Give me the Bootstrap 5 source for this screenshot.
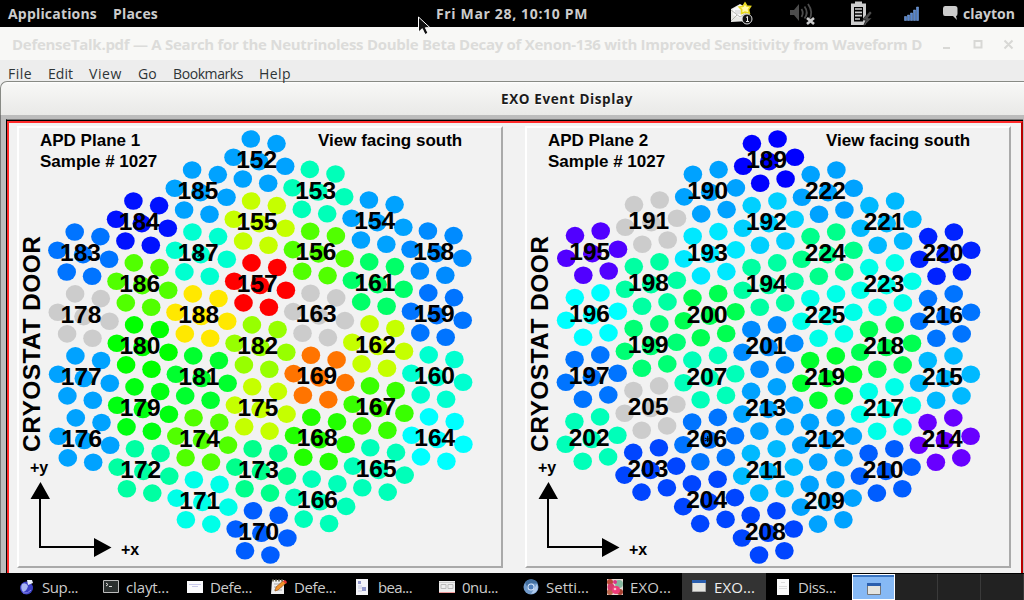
<!DOCTYPE html>
<html lang="en">
<head>
<meta charset="utf-8">
<title>EXO Event Display</title>
<link href="https://cdn.jsdelivr.net/npm/bootstrap@5.3.0/dist/css/bootstrap.min.css" rel="stylesheet">
<style>
body{width:1024px;height:600px;overflow:hidden;background:#000;font-family:"Open Sans","Noto Sans",sans-serif;font-size:14px;line-height:20px}
.fit{display:inline-block;white-space:nowrap}
.topbar{height:27px;color:#ccc;font-weight:700;font-size:14px;padding-top:1px}
.topbar svg,.task svg{display:block;flex:none}
.username{position:absolute;left:963px;top:4px;color:#ccc;font-weight:700}
.winback{height:33px;background:#f8f8f6;color:#dcdcda;font-weight:700;padding:1px 10px 0 12px;font-size:15px}
.menus{height:21px;background:#ededed;color:#2e3436;padding-left:8px;font-size:14px}
.menus .fit{margin-right:16px;line-height:28px}
.exo-title{height:34px;border-top:1px solid #888a85;border-left:1px solid #888a85;border-top-left-radius:7px;background:linear-gradient(#fff 0,#f7f7f6 2px,#e9e9e7);color:#1c1c1c;font-weight:700;font-size:13.5px;padding-left:500px;line-height:35px;text-shadow:0 1px #fff}
.titlewrap{background:#ededed}
.frame{height:458px;background:#bcbcbc;border-left:1px solid #777;padding:4px 1px 0 5px}
.bezel{height:454px;border-top:1px solid #777;border-left:1px solid #000}
.redline{height:453px;border:2px solid #ff2a2a;border-right-color:#b80000;border-bottom:0;background:#f2f2f2;box-shadow:0 -1px #000;padding:3px 0 0 8px;margin-top:1px}
.plane{width:486px;height:442px;border:2px solid #fff;border-right-color:#aaa;border-bottom-color:#aaa;background:#f2f2f2}
.plane svg{display:block;font-family:"Liberation Sans",Arial,sans-serif;font-weight:700}
.taskbar{height:27px;background:#000;color:#ccc;padding-left:10px}
.task{width:84px;padding-left:9px;gap:7px;height:27px;font-size:15px}
.task.on{background:#333;color:#eee}
.desk{width:43px;height:26px;background:#222;border-right:1px solid #3a3a3a;margin-top:1px}
.desk.on{background:#86b9f5;border:1px solid #fff;box-shadow:inset 0 2px #3a74c0}
.pointer{position:absolute;left:417px;top:16px;z-index:5}
</style>
<script src="https://cdn.jsdelivr.net/npm/bootstrap@5.3.0/dist/js/bootstrap.bundle.min.js"></script>
</head>
<body>
<nav class="topbar d-flex align-items-center">
  <span class="fit" data-w="89" style="margin-left:8px">Applications</span>
  <span class="fit" data-w="45" style="margin-left:16px">Places</span>
  <span class="fit" data-w="152" style="margin-left:278px">Fri Mar 28, 10:10 PM</span>
  <svg width="436" height="27" viewBox="588 0 436 27" style="margin-top:-1px">
    <!-- mail -->
    <path d="M731 9l9-5 9 5v12l-18 1z" fill="#e9e9e5"/><path d="M733 9l7-4 7 4v6l-7 3-7-3z" fill="#fafafa"/><path d="M731 21l6-6M731 10l9 7 8-5" stroke="#b5b5b0" fill="none"/>
    <path d="M735 11h8M735 13h7" stroke="#ccc"/>
    <path d="M745 3l1.800 3 3.700.400-2 3.100.8 3.700-4.300-1-3.500 1.300.2-3.900-2.500-2.600 3.900-.8z" fill="#fff8a8" stroke="#e8d820" stroke-width="1.600"/>
    <circle cx="747" cy="19" r="5" fill="#111" stroke="#ddd" stroke-width="1"/><path d="M746 17.500l1.500-1v5M746 21.500h3" stroke="#eee" fill="none"/>
    <!-- muted volume -->
    <path d="M790 10h4l5-6v17l-5-6h-4z" fill="#4c4c4c"/><path d="M801.500 9q2.500 4 0 8M804.500 6.500q4.500 6 0 12M808 4q6 8.500 1 16" stroke="#4c4c4c" stroke-width="1.800" fill="none"/>
    <path d="M807 18l7 6M814 18l-7 6" stroke="#ccc" stroke-width="2.600"/>
    <!-- battery -->
    <path d="M855 1.500h7v2h4v21.500h-15V3.500h4z" fill="#ccc"/><path d="M854 7h9v14.500h-9z" fill="#000"/><path d="M855 9h7M855 12.300h7M855 15.600h7M855 19h5" stroke="#ccc" stroke-width="1.700"/>
    <path d="M870 11l-8 9h4l-3 7 9-9h-4l4-5z" fill="#4c4c4c" stroke="#000" stroke-width=".6"/>
    <!-- signal -->
    <g fill="#5585cf" stroke="#8bb0e8" stroke-width=".5"><path d="M904.500 16.500h2v4h-2zM907.500 15h2v5.500h-2zM910.500 13h2v7.500h-2zM913.500 10h2v10.500h-2zM916.500 7h2v13.500h-2z"/></g>
    <!-- chat -->
    <path d="M945 6h10q2.500 0 2.500 2.500v5q0 2.500-1.500 2.500l1 4-4-4h-8q-2 0-2-2.500v-5Q943 6 945 6z" fill="#ccc"/>
  </svg>
</nav>
<div class="username"><span class="fit" data-w="52">clayton</span></div>

<header class="winback d-flex align-items-center">
  <span class="fit" data-w="910">DefenseTalk.pdf — A Search for the Neutrinoless Double Beta Decay of Xenon-136 with Improved Sensitivity from Waveform D</span>
  <svg class="ms-auto" width="72" height="16" viewBox="942 36 72 16" stroke="#d8d8d5" fill="none" stroke-width="2"><path d="M943 48h7M974.500 41h7v6.500h-7zM1004.500 40.500l8 8M1012.500 40.500l-8 8" /></svg>
</header>
<div class="menus d-flex">
  <span class="fit" data-w="24">File</span><span class="fit" data-w="25">Edit</span><span class="fit" data-w="33">View</span><span class="fit" data-w="19">Go</span><span class="fit" data-w="70">Bookmarks</span><span class="fit" data-w="32">Help</span>
</div>
<div class="titlewrap"><div class="exo-title"><span class="fit" data-w="132">EXO Event Display</span></div></div>

<main class="frame"><div class="bezel"><div class="redline d-flex">
  <div class="plane"><svg id="plane1" width="482" height="438" viewBox="19 128 482 438"></svg></div>
  <div class="plane" style="margin-left:22px"><svg id="plane2" width="482" height="438" viewBox="527 128 482 438"></svg></div>
</div></div></main>

<footer class="taskbar d-flex">
  <div class="task d-flex align-items-center"><svg width="16" height="16"><circle cx="7.500" cy="9" r="6.500" fill="#3b3fc4"/><path d="M3 5q4-2 6 2-1 5-5 6-3-4-1-8z" fill="#a9b5f2"/><path d="M8 1l5 0 1 3-5 2z" fill="#e8eefc"/><path d="M4 14q5 1 8-3" stroke="#88e" fill="none"/></svg><span class="fit" data-w="36">Sup...</span></div>
  <div class="task d-flex align-items-center"><svg width="16" height="16"><path d="M.5 1.500h15v12H.5z" fill="#2b302f" stroke="#bbb"/><path d="M3 4l2 1.500L3 7M6 7.500h3" stroke="#ddd" fill="none"/></svg><span class="fit" data-w="43">clayt...</span></div>
  <div class="task d-flex align-items-center"><svg width="16" height="16"><path d="M0 2h16v12H0z" fill="#fbfbfd"/><path d="M2 5.500h12M5 7.500h6" stroke="#c9c9ea"/></svg><span class="fit" data-w="42">Defe...</span></div>
  <div class="task d-flex align-items-center"><svg width="16" height="16"><path d="M1 1h12v14H0z" fill="#eee"/><path d="M1 1.500h12" stroke="#776" stroke-dasharray="2 1" stroke-width="2"/><path d="M3 5h8M3 8h8M3 11h8" stroke="#aaa"/><path d="M4 12l1-4 7-6 3 2-8 7z" fill="#f0922a" stroke="#8b4a12" stroke-width=".6"/><path d="M12 2l2-1 2 2-1 2z" fill="#e33"/></svg><span class="fit" data-w="42">Defe...</span></div>
  <div class="task d-flex align-items-center"><svg width="16" height="16"><path d="M1 0h12v16H1z" fill="#f4f4f8"/><path d="M3 7h4M3 9h4M3 12h4" stroke="#c4c8e0"/><path d="M3 2h3v3H3zM7 8h4v4H7z" fill="#9298cc"/></svg><span class="fit" data-w="34">bea...</span></div>
  <div class="task d-flex align-items-center"><svg width="16" height="16"><path d="M0 2h16v12H0z" fill="#eee"/><path d="M0 3.500h16" stroke="#ccc"/><path d="M2 5.500h5v4H2zM9 5.500h5v4H9z" fill="none" stroke="#bbb"/><path d="M0 13.500h16" stroke="#e99"/></svg><span class="fit" data-w="36">0nu...</span></div>
  <div class="task d-flex align-items-center"><svg width="16" height="16"><circle cx="8" cy="8" r="7.500" fill="#719bcb"/><path d="M8 4.500h7A7.500 7.500 0 0 0 2 3.500l3 6z" fill="#436f9f"/><path d="M8 15l3-5 3-5q3 8-6 10z" fill="#b1cbed"/><circle cx="8" cy="8" r="3.500" fill="#dce9fb"/><circle cx="8" cy="8" r="2.500" fill="#4c7cb8"/></svg><span class="fit" data-w="43">Setti...</span></div>
  <div class="task d-flex align-items-center"><svg width="16" height="16"><path d="M0 0h16v16H0z" fill="#e9ddd6"/><circle cx="3" cy="3" r="3" fill="#b84a35"/><circle cx="12" cy="5" r="4" fill="#85b79f"/><circle cx="3" cy="13" r="3" fill="#b8654a"/><circle cx="13" cy="13" r="3" fill="#a84233"/><circle cx="4" cy="8" r="3.500" fill="#d63a6c"/><circle cx="9" cy="11" r="4" fill="#ee3c78"/><circle cx="8" cy="10" r="1.300" fill="#fbc"/><circle cx="8" cy="3" r="2" fill="#d38"/></svg><span class="fit" data-w="41">EXO...</span></div>
  <div class="task on d-flex align-items-center"><svg width="16" height="16"><path d="M1.500 1.500h13v11h-13z" fill="#e5e5e0" stroke="#aaa"/><path d="M1 1h14v3H1z" fill="#2b5fae"/></svg><span class="fit" data-w="41">EXO...</span></div>
  <div class="task d-flex align-items-center"><svg width="16" height="16"><path d="M2 0h12v16H2z" fill="#fafafa"/><path d="M6 3.500h4M4 7.500h8M4 9.500h8" stroke="#ddd"/></svg><span class="fit" data-w="38">Diss...</span></div>
  <div class="desk on d-flex align-items-center justify-content-center" style="margin-left:2px"><svg width="14" height="12" style="margin-top:3px"><path d="M.5.5h13v11H.5z" fill="#e5e5e0" stroke="#777"/><path d="M0 0h14v3H0z" fill="#2b5fae"/></svg></div>
  <div class="desk"></div><div class="desk"></div><div class="desk"></div>
</footer>

<svg class="pointer" width="16" height="22" viewBox="0 0 16 22"><path d="M1.500 1v15l3.800-3.300L8 18.500l3-1.300-2.600-5.500h4.600z" fill="#111" stroke="#fff"/></svg>

<script>
// letter-spacing that brings each label to its nominal width
document.querySelectorAll('.fit').forEach(function (el) {
  var n = el.textContent.length, w = el.getBoundingClientRect().width;
  el.style.letterSpacing = ((+el.dataset.w - w) / n) + 'px';
});

// seven photodiodes per gang, relative to the gang centre
var gang = [[-8.4,-22.6],[17.3,-18],[-25.7,-4.3],[0,0],[26,4.7],[-16.4,17.4],[9,21.7]];
function draw(id, o) {
  var s = '', labels = '';
  o.cols.forEach(function (col, c) {
    col.split(' ').forEach(function (item, r) {
      var p = item.split(':');
      var y = o.top[c] + 61.95 * r + .3;
      var x = o.x + 58.87 * c + o.drift * (y - 254) / 62 + .4;
      gang.forEach(function (g) {
        s += '<ellipse cx="' + (x + o.flip * g[0]).toFixed(1) + '" cy="' + (y + g[1]).toFixed(1) + '" rx="9.3" ry="8.8" fill="#' + p[1] + '"/>';
      });
      labels += '<text x="' + (x - 2.6).toFixed(1) + '" y="' + (y + 6.5).toFixed(1) + '">' + p[0] + '</text>';
    });
  });
  var b = o.left;
  s += '<g font-size="24.5" text-anchor="middle">' + labels + '</g>';
  s += '<text font-size="17" x="' + (b + 23) + '" y="146">APD Plane ' + o.n + '</text>';
  s += '<text font-size="17" x="' + (b + 23) + '" y="167">Sample # 1027</text>';
  s += '<text font-size="17" x="' + (b + 301) + '" y="146">View facing south</text>';
  s += '<text font-size="24.5" textLength="216" transform="translate(' + (b + 22.5) + ' 452) rotate(-90)">CRYOSTAT DOOR</text>';
  s += '<text font-size="16" x="' + (b + 13) + '" y="473">+y</text><text font-size="16" x="' + (b + 104) + '" y="554.5">+x</text>';
  s += '<path d="M' + (b + 23) + ' 490V547H' + (b + 80) + '" fill="none" stroke="#000" stroke-width="2"/>';
  s += '<path d="M' + (b + 13.500) + ' 499L' + (b + 23.500) + ' 482L' + (b + 33) + ' 499zM' + (b + 77) + ' 538L' + (b + 94.5) + ' 547.500L' + (b + 77) + ' 557z"/>';
  s += '<path d="M' + o.star[0] + ' ' + o.star[1] + 'm0-3v6m-3-4l6 3m0-3l-6 3" stroke="#000" stroke-width="1.2"/>';
  document.getElementById(id).innerHTML = s;
}
draw('plane1', {n:1, left:17, x:82.7, drift:.37, flip:1, star:[200.5,254.5], top:[254.3,223.3,192.3,161.3,191.7,222.3,253.3], cols:[
  '183:0074ff 178:ccc 177:00a2ff 176:00a2ff',
  '184:0011ff 186:51ff00 180:00ff00 179:00ff11 172:00ffa2',
  '185:00a2ff 187:00ffd0 188:ffe800 181:00ff2e 174:51ff00 171:00ffe8',
  '152:00a2ff 155:c5ff00 157:f00 182:97ff00 175:c5ff00 173:00ff8b 170:005dff',
  '153:00ffb9 156:51ff00 163:ccc 169:ff7400 168:22ff00 166:00ffb9',
  '154:00a2ff 161:00ff68 162:c5ff00 167:39ff00 165:00ffb9',
  '158:008bff 159:0074ff 160:00ffd0 164:0ff']});
draw('plane2', {n:2, left:525, x:591.9, drift:-.2, flip:-1, star:[707.7,439], top:[253.3,222.3,191.9,161.3,192.3,223.3,254.3], cols:[
  '195:5100ff 196:0ff 197:0074ff 202:00ffb9',
  '191:ccc 198:00ffa2 199:00ff74 205:ccc 203:0045ff',
  '190:00a2ff 193:00e8ff 200:00ff51 207:00ffb9 206:0074ff 204:0045ff',
  '189:00f 192:00d0ff 194:00ffa2 201:008bff 213:00a2ff 211:00b9ff 208:0045ff',
  '222:00a2ff 224:00ff8b 225:00ffe8 219:00ff2e 212:00a2ff 209:00a2ff',
  '221:00b9ff 223:00ffe8 218:00ff51 217:00ffe8 210:005dff',
  '220:0022ff 216:0074ff 215:00b9ff 214:6800ff']});
</script>
</body>
</html>
